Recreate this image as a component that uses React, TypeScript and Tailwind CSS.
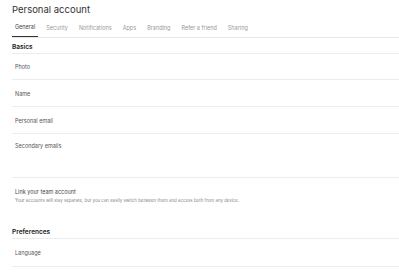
import React from 'react';

const tabs = ['General', 'Security', 'Notifications', 'Apps', 'Branding', 'Refer a friend', 'Sharing'];

function Row({ label, className }: { label: string; className: string }) {
    return (
        <div className={`${className} border-b border-[#ececec] pl-[3px]`}>
            <span className="block text-[5.5px] text-[#555] leading-none">{label}</span>
        </div>
    );
}

export default function App() {
    return (
        <div className="w-[399px] h-[273px] bg-white pl-[12px] overflow-hidden" style={{ fontFamily: 'Inter, "Noto Sans", sans-serif' }}>
            <div className="h-[14px] flex items-end">
                <h1 className="text-[9.5px] text-[#333] leading-none">Personal account</h1>
            </div>

            {/* tabs */}
            <div className="h-[24px] flex items-stretch border-b border-[#e6e6e6]">
                {tabs.map((t, i) => (
                    <div
                        key={t}
                        className={`flex items-end pb-[6px] px-[3px] mr-[5px] text-[5.5px] leading-none ${i === 0 ? 'text-[#444] border-b-[1.5px] border-[#333]' : 'text-[#999]'}`}
                    >
                        {t}
                    </div>
                ))}
            </div>

            {/* Basics */}
            <div className="h-[16px] pt-[6px] border-b border-[#ececec]">
                <span className="block text-[6.5px] font-semibold text-[#222] leading-none">Basics</span>
            </div>
            <Row label="Photo" className="h-[26px] pt-[11px]" />
            <Row label="Name" className="h-[27px] pt-[12px]" />
            <Row label="Personal email" className="h-[27px] pt-[12px]" />
            <Row label="Secondary emails" className="h-[44px] pt-[10px]" />
            <div className="pt-[12px] h-[46px] pl-[3px]">
                <span className="block text-[5.5px] text-[#444] leading-none">Link your team account</span>
                <span className="block mt-[3px] text-[4.4px] text-[#888] leading-none">
                    Your accounts will stay separate, but you can easily switch between them and access both from any device.
                </span>
            </div>

            {/* Preferences */}
            <div className="h-[15px] pt-[5px] border-b border-[#ececec]">
                <span className="block text-[6.5px] font-semibold text-[#222] leading-none">Preferences</span>
            </div>
            <Row label="Language" className="h-[28px] pt-[12px]" />
        </div>
    );
}
